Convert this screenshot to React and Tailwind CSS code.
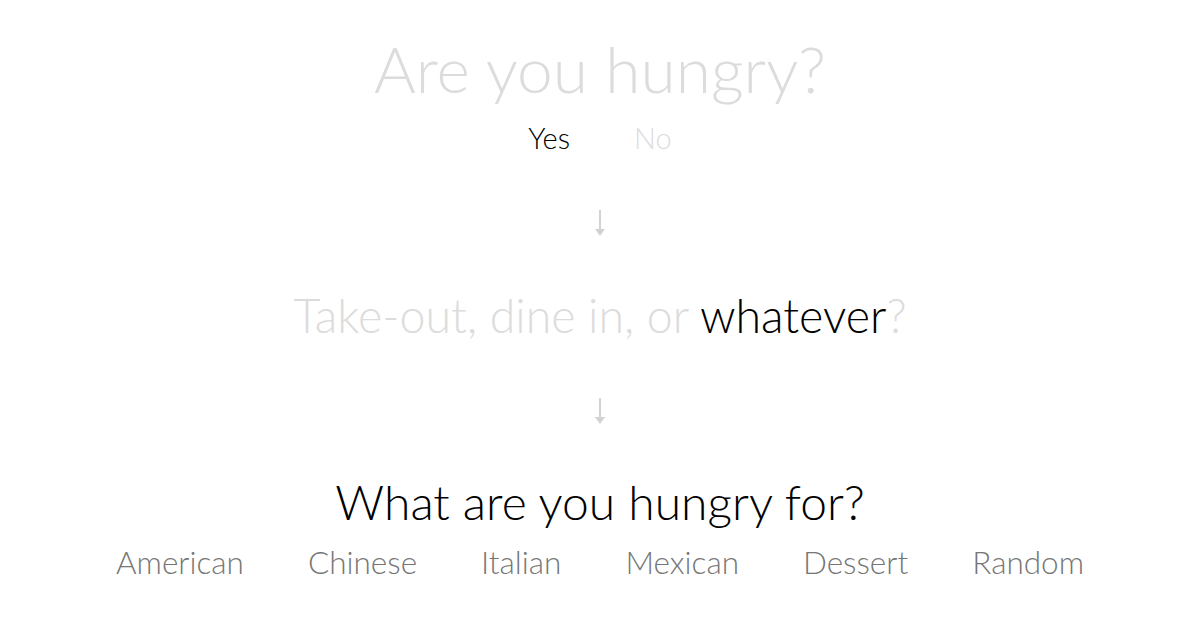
const cuisines = ["American", "Chinese", "Italian", "Mexican", "Dessert", "Random"];

const Arrow = () => (
  <svg width="14" height="28" viewBox="0 0 14 28" className="text-[#d2d2d2]">
    <path d="M7 1 V24" stroke="currentColor" strokeWidth="2" fill="none" />
    <path d="M2 20 L7 27 L12 20 Z" fill="currentColor" />
  </svg>
);

export default function App() {
  return (
    <div
      className="w-[1200px] h-[630px] bg-white flex flex-col items-center overflow-hidden"
      style={{ fontFamily: "Lato, 'Open Sans', sans-serif" }}
    >
      <h1 className="mt-[33px] text-[64px] leading-[72px] font-light text-[#dcdcdc]">
        Are you hungry?
      </h1>
      <div className="flex mt-[15px] text-[29px] leading-[36px] font-light">
        <button className="px-8 text-black">Yes</button>
        <button className="px-8 text-[#dcdcdc]">No</button>
      </div>
      <div className="mt-[53px]">
        <Arrow />
      </div>
      <h2 className="mt-[50px] text-[46.5px] leading-[56px] font-light text-[#dcdcdc]">
        Take-out, dine in, or <span className="text-black">whatever</span>?
      </h2>
      <div className="mt-[54px]">
        <Arrow />
      </div>
      <h2 className="mt-[49px] text-[48px] leading-[56px] font-light text-black">
        What are you hungry for?
      </h2>
      <div className="flex mt-[12px] text-[31.5px] leading-[40px] font-light text-[#767676]">
        {cuisines.map((c) => (
          <button key={c} className="px-8">
            {c}
          </button>
        ))}
      </div>
    </div>
  );
}
